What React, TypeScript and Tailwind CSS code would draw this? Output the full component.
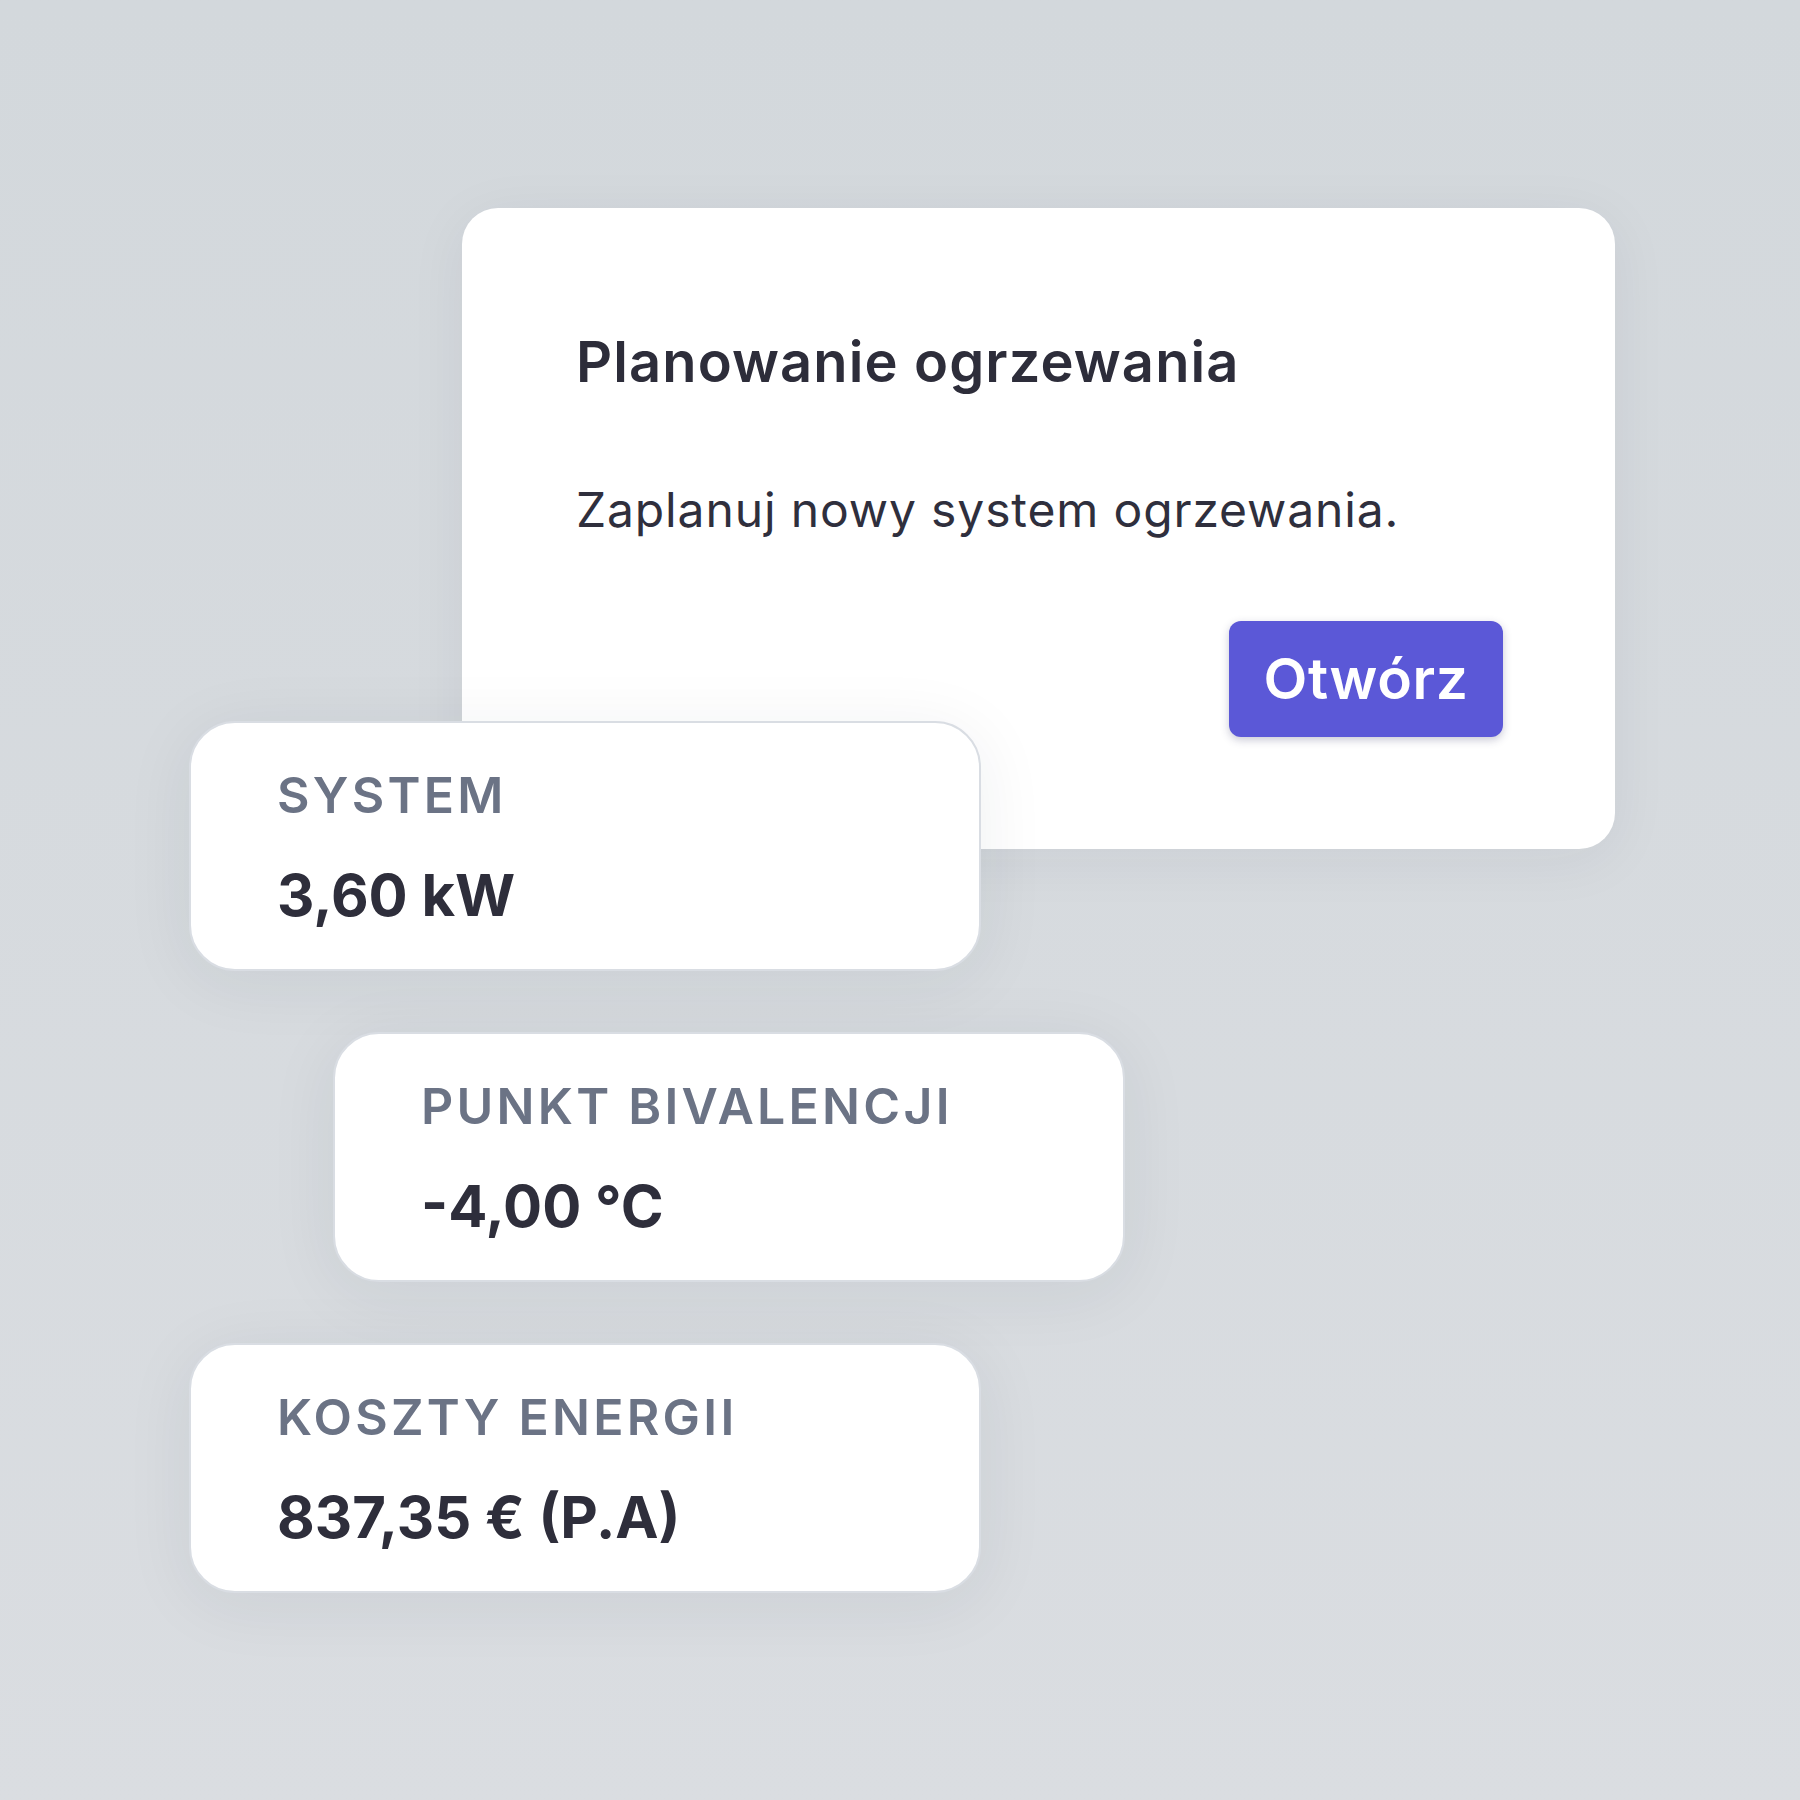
const StatCard = ({ label, value, className }: { label: string; value: string; className: string }) => {
  return (
    <div
      className={`relative z-10 w-[792px] h-[250px] rounded-[46px] border-2 border-[#d9dde3] bg-white pl-[86px] pt-[42px] shadow-[0_10px_70px_rgba(30,40,60,0.07)] ${className}`}
    >
      <p className="text-[50px] leading-[60px] font-semibold tracking-[0.065em] text-[#6b7385]">{label}</p>
      <p className="mt-[35px] text-[58px] leading-[70px] font-bold text-[#2e2e3b]">{value}</p>
    </div>
  );
};

export default function App() {
  return (
    <div
      className="min-h-[1800px] w-full bg-gradient-to-b from-[#d3d8dc] to-[#dadde1] pt-[208px] pb-[209px]"
      style={{ fontFamily: "Inter, 'Noto Sans', sans-serif" }}
    >
      <div className="ml-[462px] w-[1153px] h-[641px] rounded-[36px] bg-white pl-[114px] pr-[112px] pt-[120px] shadow-[0_10px_60px_rgba(30,40,60,0.06)]">
        <h1 className="text-[56px] leading-[68px] font-semibold tracking-[0.02em] text-[#2d2d3a]">Planowanie ogrzewania</h1>
        <p className="mt-[85px] text-[48px] leading-[58px] font-normal tracking-[0.018em] text-[#2f2f3d]">Zaplanuj nowy system ogrzewania.</p>
        <div className="mt-[82px] flex justify-end">
          <button className="h-[116px] w-[274px] rounded-[12px] bg-[#5b58d7] text-[57px] font-semibold tracking-[0.01em] text-white shadow-[0_3px_8px_rgba(40,40,90,0.25)]">
            Otwórz
          </button>
        </div>
      </div>
      <StatCard label="SYSTEM" value="3,60 kW" className="ml-[189px] -mt-[128px]" />
      <StatCard label="PUNKT BIVALENCJI" value="-4,00 °C" className="ml-[333px] mt-[61px]" />
      <StatCard label="KOSZTY ENERGII" value="837,35 € (P.A)" className="ml-[189px] mt-[61px]" />
    </div>
  );
}
